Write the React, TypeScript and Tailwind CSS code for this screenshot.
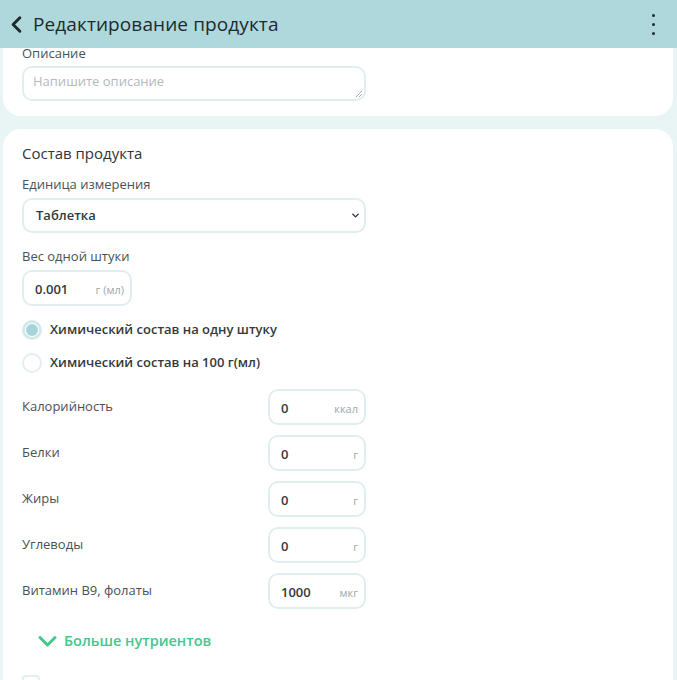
import { ChevronLeft, ChevronDown } from "lucide-react"

const nutrients = [
  { label: "Калорийность", value: "0", unit: "ккал" },
  { label: "Белки", value: "0", unit: "г" },
  { label: "Жиры", value: "0", unit: "г" },
  { label: "Углеводы", value: "0", unit: "г" },
  { label: "Витамин B9, фолаты", value: "1000", unit: "мкг" },
]

function UnitInput({ value, unit, className }: { value: string; unit: string; className: string }) {
  return (
    <div
      className={`flex items-baseline justify-between h-[36px] pt-[8px] pl-[11px] pr-[6px] rounded-[10px] border-2 border-[#e1eeef] bg-white ${className}`}
    >
      <span className="text-[13px] font-semibold text-[#33393b]">{value}</span>
      <span className="text-[11px] text-[#9ea6a9]">{unit}</span>
    </div>
  )
}

export default function App() {
  return (
    <div
      className="w-[677px] h-[680px] overflow-hidden bg-[#e9f4f5] flex flex-col"
      style={{ fontFamily: '"Open Sans", "Noto Sans", sans-serif' }}
    >
      {/* Header */}
      <div className="relative z-10 h-[48px] shrink-0 bg-[#aed8dc] flex items-center pl-[3px] pr-[22px]">
        <ChevronLeft className="w-[27px] h-[27px] text-[#1d2a2c]" strokeWidth={2.6} />
        <h1 className="ml-[3px] text-[19px] font-medium text-[#1d2a2c] tracking-[0.1px]">Редактирование продукта</h1>
        <div className="ml-auto flex flex-col gap-[6px]">
          <span className="w-[3px] h-[3px] rounded-full bg-[#1d2a2c]" />
          <span className="w-[3px] h-[3px] rounded-full bg-[#1d2a2c]" />
          <span className="w-[3px] h-[3px] rounded-full bg-[#1d2a2c]" />
        </div>
      </div>

      <div className="flex-1 px-[3px] pr-[4px]">
        {/* Description card (scrolled) */}
        <div className="-mt-[4px] bg-white rounded-b-[18px] px-[19px] pb-[15px]">
          <div className="text-[13px] leading-[18px] text-[#4a5154]">Описание</div>
          <div className="relative mt-[4px] w-[344px] h-[35px] rounded-[10px] border-2 border-[#e1eeef] px-[9px] pt-[4px] text-[13px] text-[#b2b9bc]">
            Напишите описание
            <svg className="absolute right-[1px] bottom-[1px]" width="9" height="9" viewBox="0 0 9 9">
              <path d="M8 2 L2 8 M8 5 L5 8" stroke="#a4acaf" strokeWidth="1" />
            </svg>
          </div>
        </div>

        {/* Composition card */}
        <div className="mt-[13px] bg-white rounded-t-[18px] px-[19px] pt-[14px] h-[600px]">
          <div className="text-[15px] leading-[20px] text-[#2f3538]">Состав продукта</div>

          <div className="mt-[12px] text-[13px] leading-[18px] text-[#4a5154]">Единица измерения</div>
          <div className="mt-[5px] w-[344px] h-[35px] rounded-[10px] border-2 border-[#e1eeef] flex items-center pl-[12px] pr-[3px]">
            <span className="text-[13px] font-semibold text-[#33393b]">Таблетка</span>
            <ChevronDown className="ml-auto w-[11px] h-[11px] text-[#2a2f31]" strokeWidth={3} />
          </div>

          <div className="mt-[14px] text-[13px] leading-[18px] text-[#4a5154]">Вес одной штуки</div>
          <UnitInput value="0.001" unit="г (мл)" className="mt-[5px] w-[110px] h-[35px]" />

          <div className="mt-[14px] flex items-center gap-[8px]">
            <span className="w-[20px] h-[20px] rounded-full border-[3px] border-[#d2e9ec] flex items-center justify-center">
              <span className="w-[12px] h-[12px] rounded-full bg-[#a7d4db]" />
            </span>
            <span className="text-[13px] font-semibold text-[#33393b]">Химический состав на одну штуку</span>
          </div>
          <div className="mt-[13px] flex items-center gap-[8px]">
            <span className="w-[20px] h-[20px] rounded-full border-2 border-[#e3eef0]" />
            <span className="text-[13px] font-semibold text-[#33393b]">Химический состав на 100 г(мл)</span>
          </div>

          <div className="mt-[16px] flex flex-col gap-[10px]">
            {nutrients.map((n) => (
              <div key={n.label} className="flex items-center">
                <span className="w-[246px] text-[13px] text-[#4a5154]">{n.label}</span>
                <UnitInput value={n.value} unit={n.unit} className="w-[98px]" />
              </div>
            ))}
          </div>

          <div className="mt-[22px] ml-[16px] flex items-center gap-[7px] text-[#43c78e]">
            <svg width="19" height="13" viewBox="0 0 19 13">
              <path d="M2 2.5 L9.5 10 L17 2.5" fill="none" stroke="#43c78e" strokeWidth="3" strokeLinecap="round" strokeLinejoin="round" />
            </svg>
            <span className="text-[14.5px] leading-[20px] font-semibold">Больше нутриентов</span>
          </div>

          <div className="mt-[24px] w-[18px] h-[18px] rounded-[4px] border-2 border-[#e3eef0]" />
        </div>
      </div>
    </div>
  )
}
